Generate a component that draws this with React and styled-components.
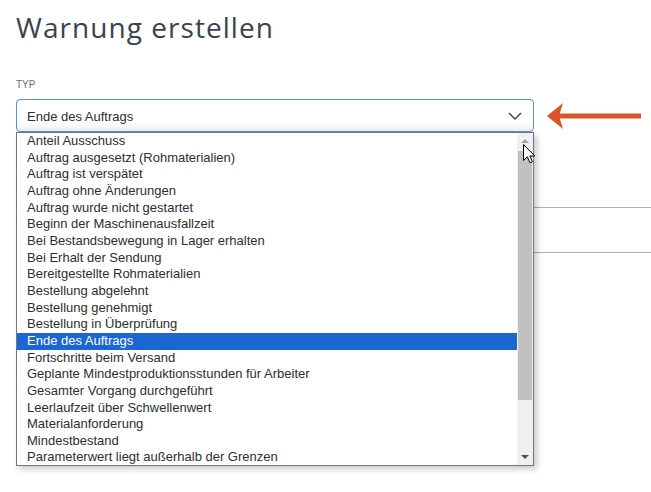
import React from "react";
import styled, { createGlobalStyle } from "styled-components";

const options = [
  "Anteil Ausschuss",
  "Auftrag ausgesetzt (Rohmaterialien)",
  "Auftrag ist verspätet",
  "Auftrag ohne Änderungen",
  "Auftrag wurde nicht gestartet",
  "Beginn der Maschinenausfallzeit",
  "Bei Bestandsbewegung in Lager erhalten",
  "Bei Erhalt der Sendung",
  "Bereitgestellte Rohmaterialien",
  "Bestellung abgelehnt",
  "Bestellung genehmigt",
  "Bestellung in Überprüfung",
  "Ende des Auftrags",
  "Fortschritte beim Versand",
  "Geplante Mindestproduktionsstunden für Arbeiter",
  "Gesamter Vorgang durchgeführt",
  "Leerlaufzeit über Schwellenwert",
  "Materialanforderung",
  "Mindestbestand",
  "Parameterwert liegt außerhalb der Grenzen",
];

const selected = "Ende des Auftrags";

function WarnungErstellen() {
  return (
    <Page>
      <Title>Warnung erstellen</Title>
      <Label>Typ</Label>
      <SelectRow>
        <SelectWrap>
          <SelectBox>
            <span>{selected}</span>
            <svg width="14" height="8" viewBox="0 0 14 8">
              <path d="M1 1 L7 7 L13 1" fill="none" stroke="#3a3f48" strokeWidth="1.4" />
            </svg>
          </SelectBox>
          <Dropdown>
            <OptionList>
              {options.map((opt) => (
                <Option key={opt} active={opt === selected}>
                  {opt}
                </Option>
              ))}
            </OptionList>
            <Scrollbar>
              <ScrollArrow up disabled />
              <ScrollTrack>
                <Thumb />
              </ScrollTrack>
              <ScrollArrow />
            </Scrollbar>
          </Dropdown>
        </SelectWrap>
        <svg width="96" height="30" viewBox="0 0 96 30">
          <rect x="12" y="12.5" width="83" height="5" fill="#dd5226" />
          <polygon points="1,15 17,2 13,15 17,28" fill="#dd5226" />
        </svg>
      </SelectRow>
      <TableRow />
      <Cursor width="13" height="20" viewBox="0 0 13 20">
        <path
          d="M0.5 0.5 L0.5 16.5 L4.3 12.8 L7 18.8 L9.4 17.8 L6.8 12 L11.8 12 Z"
          fill="#fff"
          stroke="#000"
          strokeWidth="1"
          strokeLinejoin="round"
        />
      </Cursor>
    </Page>
  );
}

export default function App() {
  return (
    <>
      <GlobalStyle />
      <WarnungErstellen />
    </>
  );
}

const GlobalStyle = createGlobalStyle`
  body {
    margin: 0;
    background: #fff;
    font-family: "Liberation Sans", Arial, sans-serif;
  }
`;

const Page = styled.div`
  position: relative;
  height: 492px;
  overflow: hidden;
  padding: 7px 0 0 16px;
  box-sizing: border-box;
`;

const Title = styled.h1`
  margin: 0;
  font-family: "Open Sans", sans-serif;
  font-weight: 400;
  font-size: 28px;
  line-height: 40px;
  letter-spacing: 1.05px;
  color: #3b4250;
`;

const Label = styled.div`
  margin-top: 32px;
  font-size: 10px;
  line-height: 12px;
  text-transform: uppercase;
  color: #6b6b6b;
`;

const SelectRow = styled.div`
  margin-top: 8px;
  display: flex;
  align-items: center;
  gap: 12px;
  position: relative;
  z-index: 2;
`;

const SelectWrap = styled.div`
  position: relative;
  width: 518px;
`;

const SelectBox = styled.div`
  height: 33px;
  box-sizing: border-box;
  border: 1px solid #5a8ee0;
  border-radius: 4px;
  padding: 1px 11px 0 10px;
  display: flex;
  align-items: center;
  justify-content: space-between;
  font-size: 13px;
  color: #2e2e2e;
  background: linear-gradient(#fff 70%, #f1f1f1);
`;

const Dropdown = styled.div`
  position: absolute;
  top: 100%;
  left: 0;
  width: 518px;
  height: 334px;
  box-sizing: border-box;
  border: 1px solid #767676;
  background: #fff;
  box-shadow: 3px 3px 6px rgba(0, 0, 0, 0.22);
  display: flex;
`;

const OptionList = styled.div`
  flex: 1;
  display: flex;
  flex-direction: column;
`;

const Option = styled.div`
  height: 16.67px;
  line-height: 16.67px;
  padding-left: 10px;
  font-size: 13px;
  white-space: nowrap;
  color: ${(p) => (p.active ? "#fff" : "#2e2e2e")};
  background: ${(p) => (p.active ? "#1a67d2" : "transparent")};
`;

const Scrollbar = styled.div`
  width: 16px;
  background: #f0f0f0;
  display: flex;
  flex-direction: column;
`;

const ScrollArrow = styled.div`
  height: 16px;
  display: flex;
  align-items: center;
  justify-content: center;
  &::before {
    content: "";
    border-left: 4px solid transparent;
    border-right: 4px solid transparent;
    ${(p) =>
      p.up
        ? `border-bottom: 4px solid ${p.disabled ? "#a3a3a3" : "#505050"};`
        : `border-top: 4px solid #505050;`}
  }
`;

const ScrollTrack = styled.div`
  flex: 1;
  padding: 2px 1px 0;
`;

const Thumb = styled.div`
  height: 249px;
  background: #c1c1c1;
`;

const TableRow = styled.div`
  margin-top: 75px;
  height: 44px;
  border-top: 1px solid #b0b0b6;
  border-bottom: 1px solid #b0b0b6;
`;

const Cursor = styled.svg`
  position: absolute;
  left: 523px;
  top: 144px;
  z-index: 5;
`;
